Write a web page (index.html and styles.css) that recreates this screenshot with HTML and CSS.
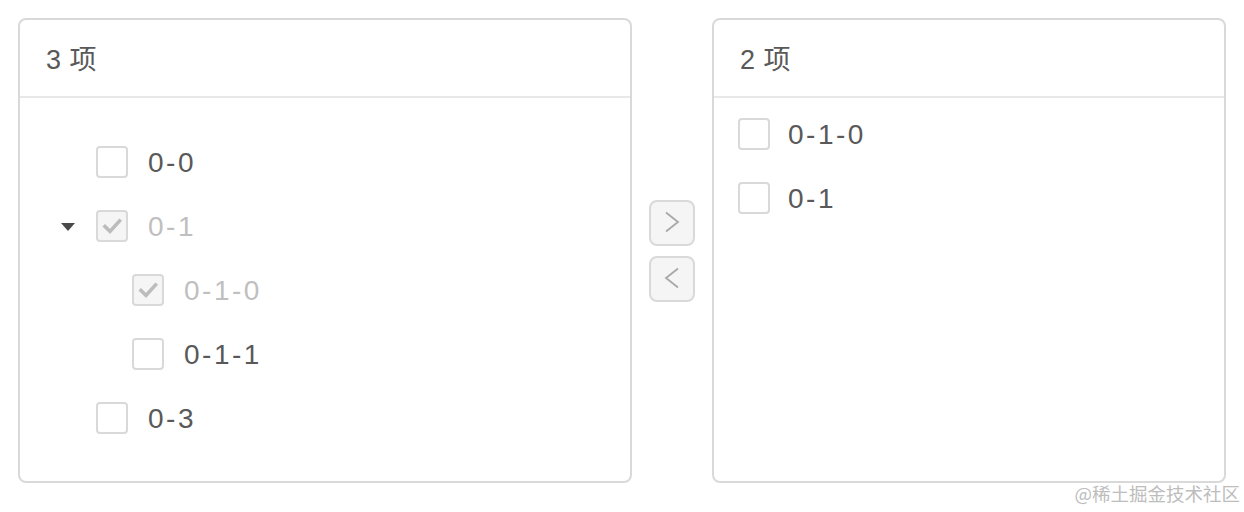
FILE: index.html
```html
<!DOCTYPE html>
<html lang="zh">
<head>
<meta charset="utf-8">
<title>Transfer</title>
<link rel="stylesheet" href="styles.css">
</head>
<body>
<div class="transfer">
  <div class="panel panel-left">
    <div class="panel-header">3 项</div>
    <div class="tree">
      <div class="node">
        <span class="switcher"></span>
        <span class="cb"></span>
        <span class="label">0-0</span>
      </div>
      <div class="node">
        <span class="switcher"><span class="caret"></span></span>
        <span class="cb cb-disabled"><svg viewBox="0 0 32 32" width="32" height="32"><path d="M9 16.5 L14 21.5 L23.5 11" fill="none" stroke="#bcbcbc" stroke-width="3.6" stroke-linecap="square"/></svg></span>
        <span class="label label-disabled">0-1</span>
      </div>
      <div class="node level1">
        <span class="switcher"></span>
        <span class="cb cb-disabled"><svg viewBox="0 0 32 32" width="32" height="32"><path d="M9 16.5 L14 21.5 L23.5 11" fill="none" stroke="#bcbcbc" stroke-width="3.6" stroke-linecap="square"/></svg></span>
        <span class="label label-disabled">0-1-0</span>
      </div>
      <div class="node level1">
        <span class="switcher"></span>
        <span class="cb"></span>
        <span class="label">0-1-1</span>
      </div>
      <div class="node">
        <span class="switcher"></span>
        <span class="cb"></span>
        <span class="label">0-3</span>
      </div>
    </div>
  </div>
  <div class="ops">
    <button class="op-btn" type="button"><svg viewBox="0 0 42 42" width="42" height="42"><path d="M15 10.5 L27 20 L15 29.5" fill="none" stroke="#a8a8a8" stroke-width="1.8" stroke-linejoin="miter"/></svg></button>
    <button class="op-btn" type="button"><svg viewBox="0 0 42 42" width="42" height="42"><path d="M27 10.5 L15 20 L27 29.5" fill="none" stroke="#a8a8a8" stroke-width="1.8" stroke-linejoin="miter"/></svg></button>
  </div>
  <div class="panel panel-right">
    <div class="panel-header">2 项</div>
    <div class="list">
      <div class="item"><span class="cb"></span><span class="label">0-1-0</span></div>
      <div class="item"><span class="cb"></span><span class="label">0-1</span></div>
    </div>
  </div>
</div>
<div class="watermark">@稀土掘金技术社区</div>
</body>
</html>
```
FILE: styles.css
```css
* { box-sizing: border-box; }
html, body { margin: 0; padding: 0; background: #ffffff; }
body {
  width: 1244px;
  height: 512px;
  position: relative;
  overflow: hidden;
  font-family: "Liberation Sans", "Noto Sans CJK SC", sans-serif;
  color: #595959;
}
.transfer {
  display: flex;
  align-items: center;
  padding: 18px 0 0 18px;
}
.panel {
  height: 465px;
  border: 2px solid #d9d9d9;
  border-radius: 8px;
  display: flex;
  flex-direction: column;
}
.panel-left { width: 614px; }
.panel-right { width: 514px; }
.panel-header {
  height: 78px;
  border-bottom: 2px solid #e8e8e8;
  padding: 0 26px 2px;
  display: flex;
  align-items: center;
  font-size: 27px;
  letter-spacing: 0.5px;
  color: #595959;
}
.tree { padding: 32px 0 0 24px; }
.node {
  height: 64px;
  display: flex;
  align-items: center;
}
.level1 { padding-left: 36px; }
.switcher {
  width: 48px;
  height: 48px;
  display: flex;
  align-items: center;
  justify-content: center;
  margin-right: 4px;
}
.caret {
  width: 0;
  height: 0;
  border-left: 7px solid transparent;
  border-right: 7px solid transparent;
  border-top: 8px solid #4a4a4a;
  margin-top: 2px;
}
.cb {
  width: 32px;
  height: 32px;
  border: 2px solid #d9d9d9;
  border-radius: 4px;
  background: #ffffff;
  flex: none;
  position: relative;
}
.cb svg { position: absolute; left: -2px; top: -2px; }
.cb-disabled { background: #f5f5f5; }
.label {
  font-size: 28px;
  margin-left: 20px;
  color: #595959;
  line-height: 1;
  letter-spacing: 2.5px;
  padding-top: 2px;
}
.label-disabled { color: #bfbfbf; }
.ops {
  width: 80px;
  display: flex;
  flex-direction: column;
  align-items: center;
  gap: 10px;
}
.op-btn {
  width: 46px;
  height: 46px;
  padding: 0;
  margin: 0;
  border: 2px solid #d9d9d9;
  border-radius: 8px;
  background: #f5f5f5;
  display: flex;
  align-items: center;
  justify-content: center;
}
.list { padding: 4px 0 0 24px; }
.item {
  height: 64px;
  display: flex;
  align-items: center;
}
.item .label { margin-left: 18px; }
.watermark {
  position: absolute;
  right: 4px;
  bottom: 6px;
  font-size: 18.5px;
  color: #bdbdbd;
  font-family: "Noto Sans CJK SC", sans-serif;
}
```
